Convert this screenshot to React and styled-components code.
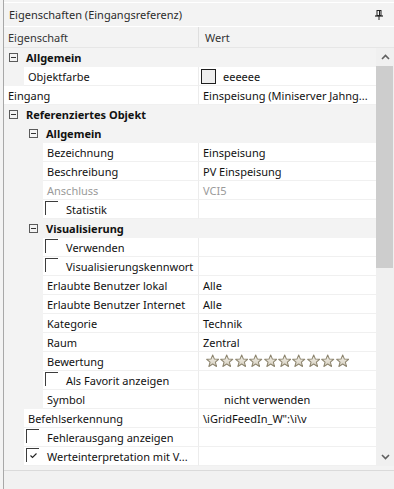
import React from 'react';
import styled, { createGlobalStyle } from 'styled-components';

const GlobalStyle = createGlobalStyle`
  html, body {
    margin: 0;
    padding: 0;
    background: #f3f3f3;
  }
  body {
    font-family: "Noto Sans", "DejaVu Sans", sans-serif;
    font-size: 11px;
    color: #111;
  }
`;

const rows = [
  { kind: 'group', level: 0, label: 'Allgemein' },
  { kind: 'leaf', level: 1, label: 'Objektfarbe', value: 'eeeeee', swatch: true },
  { kind: 'leaf', level: 0, label: 'Eingang', value: 'Einspeisung (Miniserver Jahng...' },
  { kind: 'group', level: 0, label: 'Referenziertes Objekt' },
  { kind: 'group', level: 1, label: 'Allgemein' },
  { kind: 'leaf', level: 2, label: 'Bezeichnung', value: 'Einspeisung' },
  { kind: 'leaf', level: 2, label: 'Beschreibung', value: 'PV Einspeisung' },
  { kind: 'leaf', level: 2, label: 'Anschluss', value: 'VCI5', disabled: true },
  { kind: 'check', level: 2, label: 'Statistik' },
  { kind: 'group', level: 1, label: 'Visualisierung' },
  { kind: 'check', level: 2, label: 'Verwenden' },
  { kind: 'check', level: 2, label: 'Visualisierungskennwort' },
  { kind: 'leaf', level: 2, label: 'Erlaubte Benutzer lokal', value: 'Alle' },
  { kind: 'leaf', level: 2, label: 'Erlaubte Benutzer Internet', value: 'Alle' },
  { kind: 'leaf', level: 2, label: 'Kategorie', value: 'Technik' },
  { kind: 'leaf', level: 2, label: 'Raum', value: 'Zentral' },
  { kind: 'leaf', level: 2, label: 'Bewertung', stars: 10 },
  { kind: 'check', level: 2, label: 'Als Favorit anzeigen' },
  { kind: 'leaf', level: 2, label: 'Symbol', value: 'nicht verwenden', icon: true },
  { kind: 'leaf', level: 1, label: 'Befehlserkennung', value: '\\iGridFeedIn_W":\\i\\v' },
  { kind: 'check', level: 1, label: 'Fehlerausgang anzeigen' },
  { kind: 'check', level: 1, label: 'Werteinterpretation mit V...', checked: true },
];

const indents = [0, 20, 39];

const Panel = styled.div`
  height: 489px;
  margin-left: 3px;
  border-left: 1px solid #a8a8a8;
  padding-top: 2px;
  box-sizing: border-box;
  display: flex;
  flex-direction: column;
  overflow: hidden;
`;

const TitleBar = styled.div`
  height: 23px;
  border-top: 1px solid #ffffff;
  border-bottom: 1px solid #ffffff;
  display: flex;
  align-items: center;
  justify-content: space-between;
  padding: 0 11px 0 5px;
  color: #2b2b2b;
`;

const Header = styled.div`
  height: 20px;
  display: grid;
  grid-template-columns: 194px 1fr;
  border-bottom: 1px solid #e6e6e6;
  color: #333;
`;

const HeaderCell = styled.div`
  display: flex;
  align-items: center;
  padding-left: ${p => p.$pad}px;
  border-left: ${p => (p.$divider ? '1px solid #dedede' : 'none')};
`;

const Body = styled.div`
  display: flex;
  height: 418px;
`;

const List = styled.div`
  flex: 1;
  display: flex;
  flex-direction: column;
`;

const Row = styled.div`
  height: 19px;
  display: grid;
  grid-template-columns: 194px 1fr;
`;

const NameCell = styled.div`
  display: flex;
  align-items: center;
  margin-left: ${p => p.$indent}px;
  padding-left: ${p => p.$pad}px;
  background: ${p => (p.$white ? '#ffffff' : 'transparent')};
  border-bottom: 1px solid ${p => (p.$white ? '#f0f0f0' : 'transparent')};
  font-weight: ${p => (p.$bold ? 700 : 400)};
  color: ${p => (p.$disabled ? '#9a9a9a' : '#111')};
  white-space: nowrap;
  overflow: hidden;
  min-width: 0;
`;

const CellText = styled.span`
  white-space: nowrap;
`;

const ValueCell = styled.div`
  display: flex;
  align-items: center;
  padding-left: ${p => p.$pad}px;
  background: ${p => (p.$white ? '#ffffff' : 'transparent')};
  border-left: 1px solid ${p => (p.$white ? '#ececec' : 'transparent')};
  border-bottom: 1px solid ${p => (p.$white ? '#f0f0f0' : 'transparent')};
  color: ${p => (p.$disabled ? '#9a9a9a' : '#111')};
  white-space: nowrap;
  overflow: hidden;
  min-width: 0;
`;

const Expander = styled.span`
  width: 9px;
  height: 9px;
  box-sizing: border-box;
  border: 1px solid #5a5a5a;
  margin-left: 5px;
  margin-right: 8px;
  position: relative;
  flex: none;
  &::after {
    content: '';
    position: absolute;
    left: 1px;
    right: 1px;
    top: 3px;
    height: 1px;
    background: #333;
  }
`;

const CheckBox = styled.span`
  width: 13px;
  height: 14px;
  box-sizing: border-box;
  border-top: 1px solid #3c3c3c;
  border-left: 1px solid #3c3c3c;
  margin: 1px 8px 0 2px;
  align-self: flex-start;
  flex: none;
  display: flex;
  align-items: flex-end;
  justify-content: flex-start;
`;

const Swatch = styled.span`
  width: 15px;
  height: 15px;
  box-sizing: border-box;
  border: 1px solid #1e1e1e;
  background: #eeeeee;
  margin-right: 7px;
  flex: none;
`;

const Stars = styled.div`
  display: flex;
  gap: 1px;
  margin-left: 3px;
`;

const Scrollbar = styled.div`
  width: 18px;
  background: #f0f0f0;
  display: flex;
  flex-direction: column;
`;

const ArrowButton = styled.div`
  height: 18px;
  display: flex;
  align-items: center;
  justify-content: center;
  flex: none;
`;

const Thumb = styled.div`
  height: 202px;
  margin: 0 1px 0 0;
  background: #cdcdcd;
  flex: none;
`;

const Track = styled.div`
  flex: 1;
`;

const Description = styled.div`
  flex: 1;
  margin-top: 4px;
  border-top: 1px solid #dadada;
  background: #f1f1f1;
`;

const Chevron = ({ up }) => (
  <svg width="9" height="6" viewBox="0 0 9 6">
    <polyline
      points={up ? '1,5 4.5,1.5 8,5' : '1,1 4.5,4.5 8,1'}
      fill="none"
      stroke="#606060"
      strokeWidth="1.6"
    />
  </svg>
);

const Pin = () => (
  <svg width="8" height="10" viewBox="0 0 8 10">
    <rect x="2" y="0.5" width="4" height="5" fill="none" stroke="#222" strokeWidth="1" />
    <line x1="4.5" y1="0.5" x2="4.5" y2="5.5" stroke="#222" strokeWidth="1" />
    <line x1="0" y1="6" x2="8" y2="6" stroke="#222" strokeWidth="1.2" />
    <line x1="4" y1="6" x2="4" y2="10" stroke="#222" strokeWidth="1" />
  </svg>
);

const Star = () => (
  <svg width="13.4" height="14" viewBox="0 0 14 14">
    <defs>
      <linearGradient id="starFill" x1="0" y1="0" x2="0" y2="1">
        <stop offset="0" stopColor="#f4f1ea" />
        <stop offset="1" stopColor="#d5cfbf" />
      </linearGradient>
    </defs>
    <polygon
      points="7,0.8 8.8,5 13.3,5.2 9.8,8.1 11,12.8 7,10.2 3,12.8 4.2,8.1 0.7,5.2 5.2,5"
      fill="url(#starFill)"
      stroke="#8e8670"
      strokeWidth="1.1"
      strokeLinejoin="round"
    />
  </svg>
);

const Tick = () => (
  <svg width="8" height="6" viewBox="0 0 8 6" style={{ margin: '0 0 3px 3px' }}>
    <polyline points="0.5,2.5 2.5,4.5 6.5,0.5" fill="none" stroke="#222" strokeWidth="1.1" />
  </svg>
);

function PropertyRow({ row }) {
  const indent = indents[row.level];
  if (row.kind === 'group') {
    return (
      <Row>
        <NameCell $indent={indent} $pad={0} $bold>
          <Expander />
          <CellText>{row.label}</CellText>
        </NameCell>
        <ValueCell />
      </Row>
    );
  }
  const isCheck = row.kind === 'check';
  return (
    <Row>
      <NameCell $indent={indent} $pad={isCheck ? 0 : 4} $white $disabled={row.disabled}>
        {isCheck && <CheckBox>{row.checked && <Tick />}</CheckBox>}
        <CellText>{row.label}</CellText>
      </NameCell>
      <ValueCell $white $disabled={row.disabled} $pad={row.swatch ? 2 : row.icon ? 25 : 4}>
        {row.swatch && <Swatch />}
        {row.stars ? (
          <Stars>
            {Array.from({ length: row.stars }).map((_, i) => (
              <Star key={i} />
            ))}
          </Stars>
        ) : (
          <CellText>{row.value}</CellText>
        )}
      </ValueCell>
    </Row>
  );
}

export default function App() {
  return (
    <>
      <GlobalStyle />
      <Panel>
        <TitleBar>
          <span>Eigenschaften (Eingangsreferenz)</span>
          <Pin />
        </TitleBar>
        <Header>
          <HeaderCell $pad={4}>Eigenschaft</HeaderCell>
          <HeaderCell $pad={6} $divider>Wert</HeaderCell>
        </Header>
        <Body>
          <List>
            {rows.map((row, i) => (
              <PropertyRow key={i} row={row} />
            ))}
          </List>
          <Scrollbar>
            <ArrowButton><Chevron up /></ArrowButton>
            <Thumb />
            <Track />
            <ArrowButton><Chevron /></ArrowButton>
          </Scrollbar>
        </Body>
        <Description />
      </Panel>
    </>
  );
}
